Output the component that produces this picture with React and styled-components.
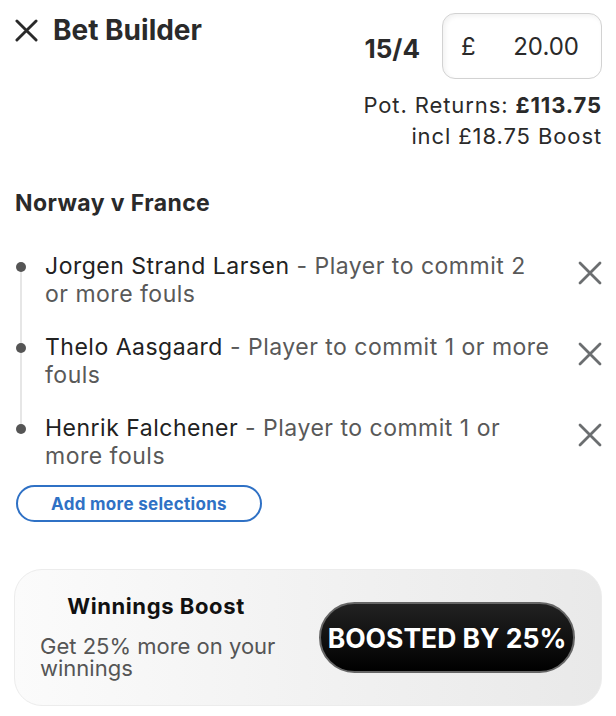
import React from 'react';
import styled, { createGlobalStyle } from 'styled-components';

const GlobalStyle = createGlobalStyle`
    body {
        margin: 0;
        background: #fff;
        font-family: Inter, "Noto Sans", sans-serif;
        color: #2a2a2a;
    }
`;

const Page = styled.div`
    width: 616px;
    padding: 13px 14px 0 14px;
    box-sizing: border-box;
`;

const Header = styled.div`
    display: flex;
    justify-content: space-between;
    align-items: flex-start;
`;

const Title = styled.div`
    display: flex;
    align-items: center;
    gap: 15px;
    padding: 0 0 0 1px;
    font-size: 28px;
    line-height: 34px;
    font-weight: 700;
    color: #2a2a2a;
    svg {
        display: block;
    }
`;

const Summary = styled.div`
    display: flex;
    flex-direction: column;
    align-items: flex-end;
`;

const StakeRow = styled.div`
    display: flex;
    align-items: center;
    gap: 22px;
`;

const Odds = styled.span`
    font-size: 26px;
    font-weight: 700;
    color: #2a2a2a;
    padding-top: 4px;
`;

const StakeBox = styled.div`
    width: 160px;
    height: 66px;
    box-sizing: border-box;
    border: 1.5px solid #d2d2d2;
    border-radius: 13px;
    box-shadow: inset 2px 2px 5px rgba(0, 0, 0, 0.06);
    display: flex;
    align-items: center;
    justify-content: space-between;
    padding: 0 22px 0 18px;
    font-size: 24px;
    color: #2a2a2a;
`;

const Returns = styled.div`
    margin-top: 11px;
    font-size: 22px;
    line-height: 31px;
    letter-spacing: 0.9px;
    text-align: right;
    color: #2a2a2a;
    b {
        font-weight: 700;
    }
`;

const Match = styled.h2`
    margin: 38px 0 0 1px;
    font-size: 23px;
    line-height: 26px;
    letter-spacing: 0.4px;
    font-weight: 700;
    color: #2a2a2a;
`;

const Legs = styled.ul`
    list-style: none;
    margin: 36px 0 0 0;
    padding: 0;
    position: relative;
    &::before {
        content: '';
        position: absolute;
        left: 6px;
        top: 15px;
        height: 162px;
        width: 2px;
        background: #e6e6e6;
    }
`;

const Leg = styled.li`
    display: flex;
    align-items: flex-start;
    justify-content: space-between;
    padding-left: 31px;
    position: relative;
    & + & {
        margin-top: 25px;
    }
    &::before {
        content: '';
        position: absolute;
        left: 2px;
        top: 10px;
        width: 10px;
        height: 10px;
        border-radius: 50%;
        background: #555;
    }
`;

const LegText = styled.div`
    width: 510px;
    font-size: 23px;
    line-height: 28px;
    letter-spacing: 0.5px;
    color: #595959;
    span {
        color: #222;
    }
`;

const RemoveButton = styled.button`
    border: none;
    background: none;
    padding: 0;
    margin: 9px 0 0 0;
    cursor: pointer;
    svg {
        display: block;
    }
`;

const AddButton = styled.button`
    margin: 15px 0 0 2px;
    width: 246px;
    height: 37px;
    border: 2px solid #2f71c5;
    border-radius: 20px;
    background: #fff;
    color: #2f71c5;
    font-family: inherit;
    font-size: 17px;
    letter-spacing: 0.3px;
    font-weight: 700;
    cursor: pointer;
`;

const BoostCard = styled.div`
    margin-top: 47px;
    height: 137px;
    box-sizing: border-box;
    border: 1px solid #ececec;
    border-radius: 28px;
    background: linear-gradient(90deg, #fbfbfb 0%, #f1f1f1 55%, #e9e9e9 100%);
    display: flex;
    align-items: center;
    justify-content: space-between;
    padding: 0 26px 0 25px;
`;

const BoostInfo = styled.div`
    display: flex;
    flex-direction: column;
    width: 238px;
    margin-top: -3px;
`;

const BoostTitle = styled.div`
    text-align: center;
    font-size: 22px;
    line-height: 26px;
    letter-spacing: 0.6px;
    font-weight: 700;
    color: #111;
    margin-bottom: 16px;
    padding-right: 6px;
`;

const BoostText = styled.div`
    font-size: 22px;
    line-height: 22px;
    color: #555;
`;

const BoostBadge = styled.div`
    width: 256px;
    height: 71px;
    box-sizing: border-box;
    border: 2px solid #666;
    border-radius: 36px;
    background: linear-gradient(180deg, #222 0%, #000 100%);
    color: #fff;
    font-size: 26.5px;
    font-weight: 700;
    display: flex;
    align-items: center;
    justify-content: center;
`;

const CloseIcon = ({ size, color, stroke }) => (
    <svg width={size} height={size} viewBox="0 0 24 24" fill="none">
        <path
            d="M2 2 L22 22 M22 2 L2 22"
            stroke={color}
            strokeWidth={stroke}
            strokeLinecap="round"
        />
    </svg>
);

const legs = [
    { player: 'Jorgen Strand Larsen', market: 'Player to commit 2 or more fouls' },
    { player: 'Thelo Aasgaard', market: 'Player to commit 1 or more fouls' },
    { player: 'Henrik Falchener', market: 'Player to commit 1 or more fouls' },
];

function App() {
    return (
        <Page>
            <GlobalStyle />
            <Header>
                <Title>
                    <CloseIcon size={23} color="#2a2a2a" stroke={3} />
                    Bet Builder
                </Title>
                <Summary>
                    <StakeRow>
                        <Odds>15/4</Odds>
                        <StakeBox>
                            <span>£</span>
                            <span>20.00</span>
                        </StakeBox>
                    </StakeRow>
                    <Returns>
                        Pot. Returns: <b>£113.75</b>
                        <br />
                        incl £18.75 Boost
                    </Returns>
                </Summary>
            </Header>

            <Match>Norway v France</Match>

            <Legs>
                {legs.map((leg) => (
                    <Leg key={leg.player}>
                        <LegText>
                            <span>{leg.player}</span> - {leg.market}
                        </LegText>
                        <RemoveButton aria-label="Remove">
                            <CloseIcon size={24} color="#6b6e70" stroke={2.8} />
                        </RemoveButton>
                    </Leg>
                ))}
            </Legs>

            <AddButton>Add more selections</AddButton>

            <BoostCard>
                <BoostInfo>
                    <BoostTitle>Winnings Boost</BoostTitle>
                    <BoostText>Get 25% more on your winnings</BoostText>
                </BoostInfo>
                <BoostBadge>BOOSTED BY 25%</BoostBadge>
            </BoostCard>
        </Page>
    );
}

export default App;
